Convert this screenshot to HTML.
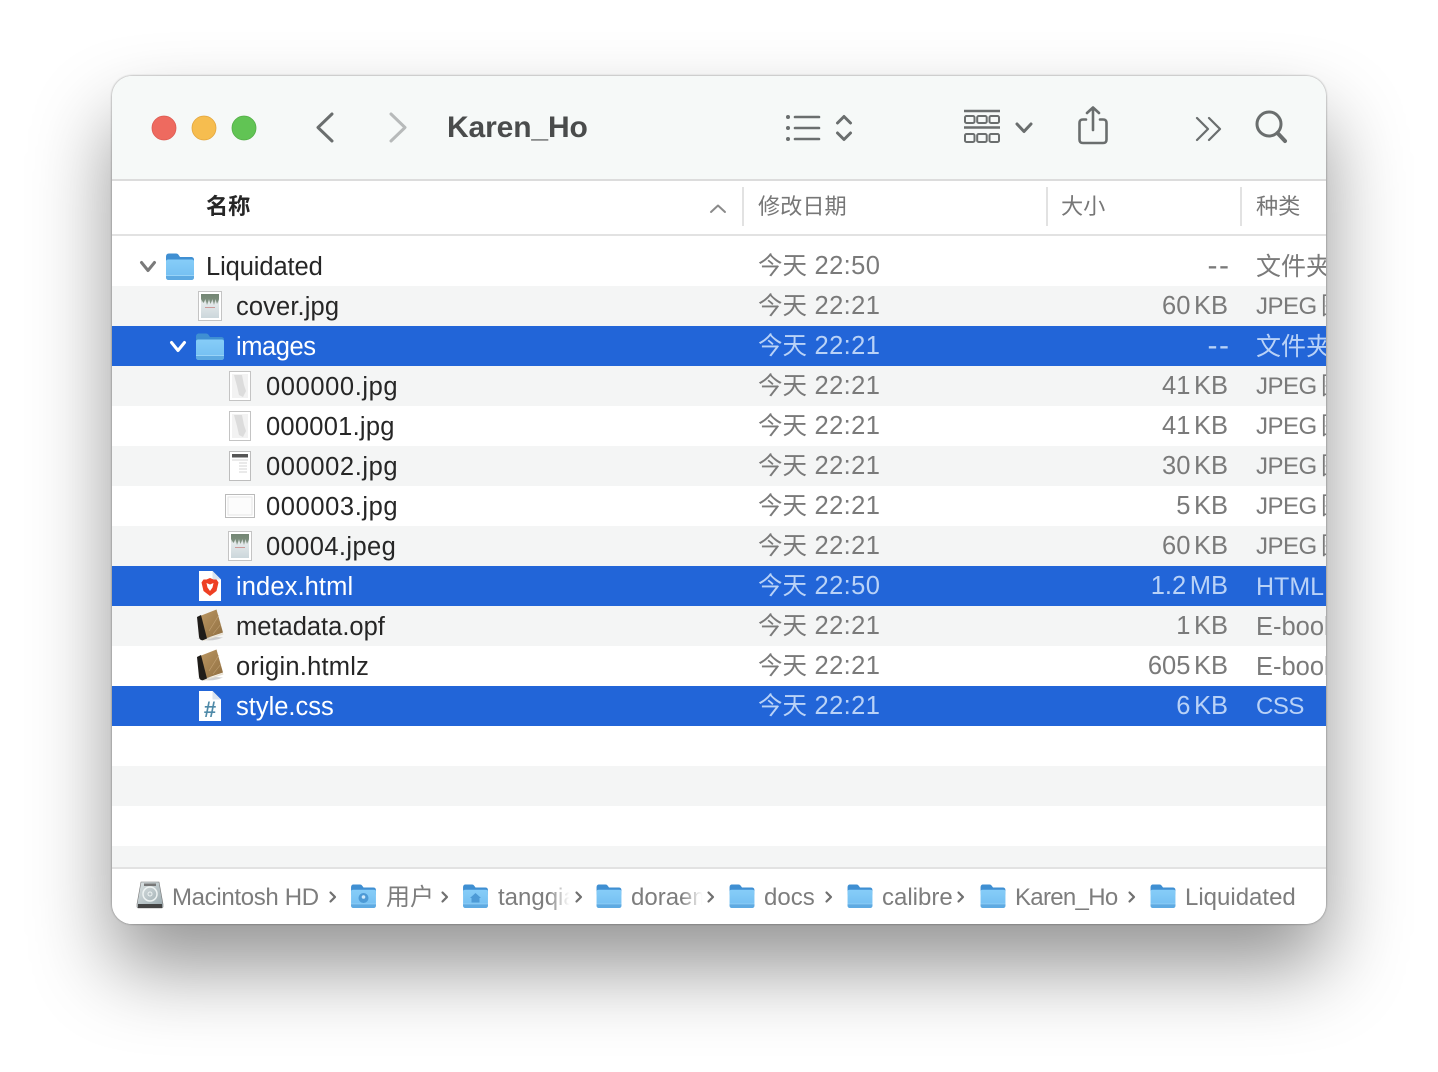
<!DOCTYPE html>
<html lang="zh"><head><meta charset="utf-8"><title>Karen_Ho</title>
<style>
html,body{margin:0;padding:0;width:1438px;height:1072px;overflow:hidden;background:#fff;font-family:"Liberation Sans","Noto Sans CJK SC",sans-serif}
#win{position:absolute;left:112px;top:76px;width:1214px;height:848px;border-radius:20px;background:#fff;box-shadow:0 44px 80px rgba(0,0,0,.42),0 0 2px rgba(0,0,0,.45)}
#clip{position:absolute;inset:0;border-radius:20px;overflow:hidden}
#tb{position:absolute;left:0;top:0;width:1214px;height:103px;background:#f6f9f8;border-bottom:2px solid #dcdcdc}
#hd{position:absolute;left:0;top:105px;width:1214px;height:53px;background:#fff;border-bottom:2px solid #e2e2e2}
.sep{position:absolute;top:6px;width:2px;height:39px;background:#e2e2e2}
.h{position:absolute;top:10px;font-size:22.2px;line-height:32px;color:#777}
.r{position:absolute;left:0;width:1214px;height:40px;line-height:40px;font-size:25.5px;color:#7a7a7a;white-space:nowrap;overflow:hidden}
.a{background:#f4f5f5}
.w{background:#fff}
.sl{background:#2265d8;color:#b9d2f7}
.r span{position:absolute;top:0}
.r span.n{top:1px}
.n{color:#262626;letter-spacing:-.1px}
.sl .n{color:#fff}
.d{left:646px;letter-spacing:.4px}
.s{text-align:right;width:200px;left:916px;word-spacing:-3.5px}
.r span.z{left:918.5px;font-size:30px;letter-spacing:1.5px}
.r span.k{left:1144px;top:1px;font-size:24px;letter-spacing:-.5px;word-spacing:-2px}
.c{font-size:24.5px;letter-spacing:0;font-weight:400}
.r span.k.c{font-size:25px;letter-spacing:0}
#bar{position:absolute;left:0;top:791px;width:1214px;height:57px;background:#fff;border-top:2px solid #e2e2e2;box-sizing:border-box}
.b{position:absolute;top:10px;line-height:36px;font-size:24px;color:#7d7d7d;white-space:nowrap}
svg.i{position:absolute;overflow:visible}
.fade{position:absolute;top:10px;width:24px;height:34px;background:linear-gradient(90deg,rgba(255,255,255,0),#fff 90%)}
</style></head><body>
<svg width="0" height="0" style="position:absolute"><defs>
<linearGradient id="fb" x1="0" y1="0" x2="0" y2="1"><stop offset="0" stop-color="#86cdf8"/><stop offset="1" stop-color="#72bdf1"/></linearGradient>
<linearGradient id="bk" x1="0" y1="0" x2="1" y2="1"><stop offset="0" stop-color="#bb9763"/><stop offset="1" stop-color="#8f6e40"/></linearGradient>
<linearGradient id="cv" x1="0" y1="0" x2="0" y2="1"><stop offset="0" stop-color="#8a9a86"/><stop offset=".38" stop-color="#e4e9ea"/><stop offset="1" stop-color="#ccd7dc"/></linearGradient>
<linearGradient id="hdg" x1="0" y1="0" x2="1" y2="1"><stop offset="0" stop-color="#dde3e4"/><stop offset="1" stop-color="#98a8ad"/></linearGradient>
<symbol id="folder" viewBox="0 0 28 27">
<path d="M0 4C0 1.500 1 .5 3 .5H10C11.500 .5 12 1 13 2.500L14 4H25C27 4 28 5 28 7V12H0Z" fill="#3f8fd2"/>
<path d="M0 8.500C0 7 1 6.500 2.500 6.500H25.500C27 6.500 28 7 28 8.500V24C28 26 27 27 25 27H3C1 27 0 26 0 24Z" fill="url(#fb)"/>
<path d="M0 22.500H28V24C28 26 27 27 25 27H3C1 27 0 26 0 24Z" fill="#5eaae2"/>
<path d="M0 22.500H28" stroke="#a8dcfb" stroke-width=".7"/>
</symbol>
<symbol id="book" viewBox="0 0 28 32">
<path d="M1 29Q14 34 27 28.500L20 28Z" fill="#999" opacity=".45"/>
<path d="M4 7L20.500 .5L27 23.500L9.500 29.500Z" fill="url(#bk)"/>
<path d="M1 8L5 6L11 29.500L7 31.300C4.500 31.500 3.500 30 3 28Z" fill="#1f1c19"/>
<path d="M7 31.300L27 24L27.500 25.500L7.500 32Z" fill="#e9e2d2"/>
<path d="M13 22L23 6M17 25L25 15" stroke="#d2b285" stroke-width=".6" opacity=".7"/>
</symbol>
<symbol id="page" viewBox="0 0 22 30">
<path d="M0 0H13.500L22 8.500V30H0Z" fill="#fff"/>
<path d="M13.500 0V8.500H22Z" fill="#dbe3ee"/>
</symbol>
<symbol id="cover" viewBox="0 0 24 30">
<rect x=".5" y=".5" width="23" height="29" fill="#fff" stroke="#c4c4c4"/>
<rect x="3" y="3" width="18" height="24" fill="url(#cv)"/>
<path d="M3 3H21V8L19 13L17.500 8L16 14L14.500 8L12.500 13L11 8L9 14L7.500 8L5.500 12L3 8Z" fill="#6f8270" opacity=".85"/>
<rect x="7" y="16" width="10" height="1" fill="#c99"/>
</symbol>
<symbol id="pg" viewBox="0 0 22 30">
<rect x=".5" y=".5" width="21" height="29" fill="#fff" stroke="#c4c4c4"/>
<rect x="3" y="3" width="16" height="24" fill="#f2f2f2"/>
<path d="M5 4L13 4L15 14L17 20L14 26L10 24L8 15Z" fill="#dcdcdc"/>
</symbol>
</defs></svg>

<div id="win"><div id="clip">
<div id="tb">
<svg class="i" style="left:0;top:0" width="1214" height="103" viewBox="112 76 1214 103" fill="none">
<circle cx="164" cy="128" r="12" fill="#ee6a5f" stroke="#dd5b52" stroke-width=".8"/>
<circle cx="204" cy="128" r="12" fill="#f6bd4f" stroke="#e3a63d" stroke-width=".8"/>
<circle cx="244" cy="128" r="12" fill="#61c454" stroke="#53ae47" stroke-width=".8"/>
<path d="M332 114L318 127.500L332 141" stroke="#6a6e6e" stroke-width="3" stroke-linecap="round" stroke-linejoin="round"/>
<path d="M391 114L405 127.500L391 141" stroke="#b7baba" stroke-width="3" stroke-linecap="round" stroke-linejoin="round"/>
<g stroke="#6a6e6e" stroke-width="2.600" stroke-linecap="round">
<path d="M795 117H819M795 128H819M795 139H819"/>
</g>
<circle cx="788" cy="117" r="2" fill="#6a6e6e"/><circle cx="788" cy="128" r="2" fill="#6a6e6e"/><circle cx="788" cy="139" r="2" fill="#6a6e6e"/>
<g stroke="#6a6e6e" stroke-width="3" stroke-linecap="round" stroke-linejoin="round">
<path d="M837.500 123L844 116.500L850.500 123M837.500 133L844 139.500L850.500 133"/>
<path d="M1017 124L1024 131.500L1031 124"/>
</g>
<g stroke="#6a6e6e" fill="none">
<path d="M964 111H1000M964 127.500H1000" stroke-width="2.400"/>
<g stroke-width="2">
<rect x="965" y="116" width="9.500" height="7" rx="1.500"/><rect x="977.200" y="116" width="9.500" height="7" rx="1.500"/><rect x="989.500" y="116" width="9.500" height="7" rx="1.500"/>
<rect x="965" y="134" width="9.500" height="8" rx="1.500"/><rect x="977.200" y="134" width="9.500" height="8" rx="1.500"/><rect x="989.500" y="134" width="9.500" height="8" rx="1.500"/>
</g></g>
<g stroke="#6a6e6e" stroke-width="2.600" stroke-linecap="round" stroke-linejoin="round">
<path d="M1086 119.500H1083C1080.500 119.500 1079.500 120.500 1079.500 123V139.500C1079.500 142 1080.500 143 1083 143H1103C1105.500 143 1106.500 142 1106.500 139.500V123C1106.500 120.500 1105.500 119.500 1103 119.500H1100"/>
<path d="M1093 130V107.500M1087 113L1093 107.500L1099 113"/>
</g>
<g stroke="#6a6e6e" stroke-width="2.200" stroke-linecap="round" stroke-linejoin="round">
<path d="M1197 118L1208 129L1197 140M1209 118L1220 129L1209 140"/>
</g>
<circle cx="1269" cy="124" r="12" stroke="#6a6e6e" stroke-width="3"/>
<path d="M1277.500 133L1285 141" stroke="#6a6e6e" stroke-width="4" stroke-linecap="round"/>
</svg>
<span style="position:absolute;left:335px;top:32px;font-size:30px;line-height:40px;font-weight:700;color:#4a4c4c;letter-spacing:-.12px">Karen_Ho</span>
</div>

<div id="hd">
<span class="h" style="left:94px;color:#262626;font-weight:700">名称</span>
<svg class="i" style="left:598px;top:23px" width="16" height="10" fill="none"><path d="M1 8L8 1.500L15 8" stroke="#8a8a8a" stroke-width="2" stroke-linecap="round" stroke-linejoin="round"/></svg>
<i class="sep" style="left:630px"></i>
<span class="h" style="left:646px">修改日期</span>
<i class="sep" style="left:934px"></i>
<span class="h" style="left:949px">大小</span>
<i class="sep" style="left:1128px"></i>
<span class="h" style="left:1144px">种类</span>
</div>

<div class="r w" style="top:170px"><span class="n" style="left:94px">Liquidated</span><span class="d"><b class="c">今天</b> 22:50</span><span class="s z">--</span><span class="k c">文件夹</span></div>
<div class="r a" style="top:210px"><span class="n" style="left:124px;letter-spacing:.12px">cover.jpg</span><span class="d"><b class="c">今天</b> 22:21</span><span class="s">60 KB</span><span class="k">JPEG <b class="c">图像</b></span></div>
<div class="r sl" style="top:250px"><span class="n" style="left:124px;letter-spacing:-.43px">images</span><span class="d"><b class="c">今天</b> 22:21</span><span class="s z">--</span><span class="k c">文件夹</span></div>
<div class="r a" style="top:290px"><span class="n" style="left:154px;letter-spacing:.6px">000000.jpg</span><span class="d"><b class="c">今天</b> 22:21</span><span class="s">41 KB</span><span class="k">JPEG <b class="c">图像</b></span></div>
<div class="r w" style="top:330px"><span class="n" style="left:154px;letter-spacing:.25px">000001.jpg</span><span class="d"><b class="c">今天</b> 22:21</span><span class="s">41 KB</span><span class="k">JPEG <b class="c">图像</b></span></div>
<div class="r a" style="top:370px"><span class="n" style="left:154px;letter-spacing:.6px">000002.jpg</span><span class="d"><b class="c">今天</b> 22:21</span><span class="s">30 KB</span><span class="k">JPEG <b class="c">图像</b></span></div>
<div class="r w" style="top:410px"><span class="n" style="left:154px;letter-spacing:.6px">000003.jpg</span><span class="d"><b class="c">今天</b> 22:21</span><span class="s">5 KB</span><span class="k">JPEG <b class="c">图像</b></span></div>
<div class="r a" style="top:450px"><span class="n" style="left:154px;letter-spacing:.4px">00004.jpeg</span><span class="d"><b class="c">今天</b> 22:21</span><span class="s">60 KB</span><span class="k">JPEG <b class="c">图像</b></span></div>
<div class="r sl" style="top:490px"><span class="n" style="left:124px;letter-spacing:.1px">index.html</span><span class="d"><b class="c">今天</b> 22:50</span><span class="s">1.2 MB</span><span class="k" style="font-size:25px;letter-spacing:0">HTML <b class="c">文本</b></span></div>
<div class="r a" style="top:530px"><span class="n" style="left:124px;letter-spacing:0">metadata.opf</span><span class="d"><b class="c">今天</b> 22:21</span><span class="s">1 KB</span><span class="k" style="font-size:25.5px;letter-spacing:0">E-book</span></div>
<div class="r w" style="top:570px"><span class="n" style="left:124px;letter-spacing:.23px">origin.htmlz</span><span class="d"><b class="c">今天</b> 22:21</span><span class="s">605 KB</span><span class="k" style="font-size:25.5px;letter-spacing:0">E-book</span></div>
<div class="r sl" style="top:610px"><span class="n" style="left:124px;letter-spacing:0">style.css</span><span class="d"><b class="c">今天</b> 22:21</span><span class="s">6 KB</span><span class="k">CSS</span></div>
<div class="r a" style="top:690px"></div>
<div class="r a" style="top:770px"></div>

<!-- row icons -->
<svg class="i" style="left:28px;top:185px" width="16" height="12" fill="none"><path d="M1.500 1.500L8 9.500L14.500 1.500" stroke="#7a7a7a" stroke-width="3" stroke-linecap="round" stroke-linejoin="round"/></svg>
<svg class="i" style="left:58px;top:265px" width="16" height="12" fill="none"><path d="M1.500 1.500L8 9.500L14.500 1.500" stroke="#fff" stroke-width="3" stroke-linecap="round" stroke-linejoin="round"/></svg>
<svg class="i" style="left:54px;top:177px" width="28" height="27"><use href="#folder"/></svg>
<svg class="i" style="left:84px;top:257px" width="28" height="27"><use href="#folder"/></svg>
<svg class="i" style="left:86px;top:215px" width="24" height="30"><use href="#cover"/></svg>
<svg class="i" style="left:117px;top:295px" width="22" height="30"><use href="#pg"/></svg>
<svg class="i" style="left:117px;top:335px" width="22" height="30"><use href="#pg"/></svg>
<svg class="i" style="left:117px;top:375px" width="22" height="30" viewBox="0 0 22 30"><rect x=".5" y=".5" width="21" height="29" fill="#fff" stroke="#bdbdbd"/><rect x="3" y="3" width="16" height="3.500" fill="#555"/><path d="M3 9H19M10 12H18M10 15H18M10 18H18M10 21H18" stroke="#d4d4d4"/></svg>
<svg class="i" style="left:113px;top:418px" width="30" height="25" viewBox="0 0 30 25"><rect x=".5" y=".5" width="29" height="23" fill="#fff" stroke="#bbb"/><rect x="3" y="3" width="24" height="18" fill="#fcfcfc" stroke="#e6e6e6"/></svg>
<svg class="i" style="left:116px;top:455px" width="24" height="30"><use href="#cover"/></svg>
<svg class="i" style="left:87px;top:495px" width="22" height="30" viewBox="0 0 22 30"><use href="#page" width="22" height="30"/><path d="M11 7L14.500 8.500H17.500L19.500 11.500L17.500 20L11 25L4.500 20L2.500 11.500L4.500 8.500H7.500Z" fill="#ee3f23"/><path d="M7.500 12L11 13.500L14.500 12L13.500 16.500L11 20L8.500 16.500Z" fill="#fff"/></svg>
<svg class="i" style="left:84px;top:533px" width="28" height="32"><use href="#book"/></svg>
<svg class="i" style="left:84px;top:573px" width="28" height="32"><use href="#book"/></svg>
<svg class="i" style="left:87px;top:615px" width="22" height="30" viewBox="0 0 22 30"><use href="#page" width="22" height="30"/><text x="11" y="26" text-anchor="middle" font-family="Liberation Sans" font-weight="700" font-size="22" fill="#4f8aa8">#</text></svg>

<div id="bar"><div style="position:absolute;left:0;top:1px">
<svg class="i" style="left:25px;top:12px" width="26" height="26" viewBox="0 0 26 26"><path d="M4 0H22L26 22V25L25 26H1L0 25V22Z" fill="url(#hdg)" stroke="#777" stroke-width=".6"/><rect x="7" y="1.500" width="12" height="2.500" fill="#777"/><circle cx="13" cy="12" r="7" fill="none" stroke="#eef3f3" stroke-width="1.500"/><circle cx="13" cy="12" r="2" fill="none" stroke="#eef3f3"/><rect x="1" y="22" width="24" height="4" fill="#444"/></svg>
<span class="b" style="left:60px;letter-spacing:-.33px">Macintosh HD</span>
<svg class="i" style="left:217px;top:21px" width="8" height="12" fill="none"><path d="M1.500 1.500L6 6L1.500 10.500" stroke="#707070" stroke-width="2.200" stroke-linecap="round" stroke-linejoin="round"/></svg>
<svg class="i" style="left:239px;top:14px" width="25" height="24"><use href="#folder"/></svg>
<svg class="i" style="left:239px;top:14px" width="25" height="24" viewBox="0 0 25 24"><circle cx="12.500" cy="14" r="5" fill="#4d9ad6"/><circle cx="12.500" cy="13" r="1.800" fill="#cfe9fb"/></svg>
<span class="b" style="left:274px">用户</span>
<svg class="i" style="left:329px;top:21px" width="8" height="12" fill="none"><path d="M1.500 1.500L6 6L1.500 10.500" stroke="#707070" stroke-width="2.200" stroke-linecap="round" stroke-linejoin="round"/></svg>
<svg class="i" style="left:351px;top:14px" width="25" height="24"><use href="#folder"/></svg>
<svg class="i" style="left:351px;top:14px" width="25" height="24" viewBox="0 0 25 24"><path d="M12.500 9L18 14H16.500V18.500H8.500V14H7Z" fill="#4d9ad6"/></svg>
<span class="b" style="left:386px;width:72px;overflow:hidden">tangqiao</span><i class="fade" style="left:436px"></i>
<svg class="i" style="left:463px;top:21px" width="8" height="12" fill="none"><path d="M1.500 1.500L6 6L1.500 10.500" stroke="#707070" stroke-width="2.200" stroke-linecap="round" stroke-linejoin="round"/></svg>
<svg class="i" style="left:484px;top:14px" width="26" height="24"><use href="#folder"/></svg>
<span class="b" style="left:519px;width:72px;overflow:hidden">doraemon</span><i class="fade" style="left:569px"></i>
<svg class="i" style="left:595px;top:21px" width="8" height="12" fill="none"><path d="M1.500 1.500L6 6L1.500 10.500" stroke="#707070" stroke-width="2.200" stroke-linecap="round" stroke-linejoin="round"/></svg>
<svg class="i" style="left:617px;top:14px" width="26" height="24"><use href="#folder"/></svg>
<span class="b" style="left:652px">docs</span>
<svg class="i" style="left:713px;top:21px" width="8" height="12" fill="none"><path d="M1.500 1.500L6 6L1.500 10.500" stroke="#707070" stroke-width="2.200" stroke-linecap="round" stroke-linejoin="round"/></svg>
<svg class="i" style="left:735px;top:14px" width="26" height="24"><use href="#folder"/></svg>
<span class="b" style="left:770px">calibre</span>
<svg class="i" style="left:845px;top:21px" width="8" height="12" fill="none"><path d="M1.500 1.500L6 6L1.500 10.500" stroke="#707070" stroke-width="2.200" stroke-linecap="round" stroke-linejoin="round"/></svg>
<svg class="i" style="left:868px;top:14px" width="26" height="24"><use href="#folder"/></svg>
<span class="b" style="left:903px;letter-spacing:-.7px">Karen_Ho</span>
<svg class="i" style="left:1016px;top:21px" width="8" height="12" fill="none"><path d="M1.500 1.500L6 6L1.500 10.500" stroke="#707070" stroke-width="2.200" stroke-linecap="round" stroke-linejoin="round"/></svg>
<svg class="i" style="left:1038px;top:14px" width="26" height="24"><use href="#folder"/></svg>
<span class="b" style="left:1073px">Liquidated</span>
</div></div>
</div></div>
</body></html>
